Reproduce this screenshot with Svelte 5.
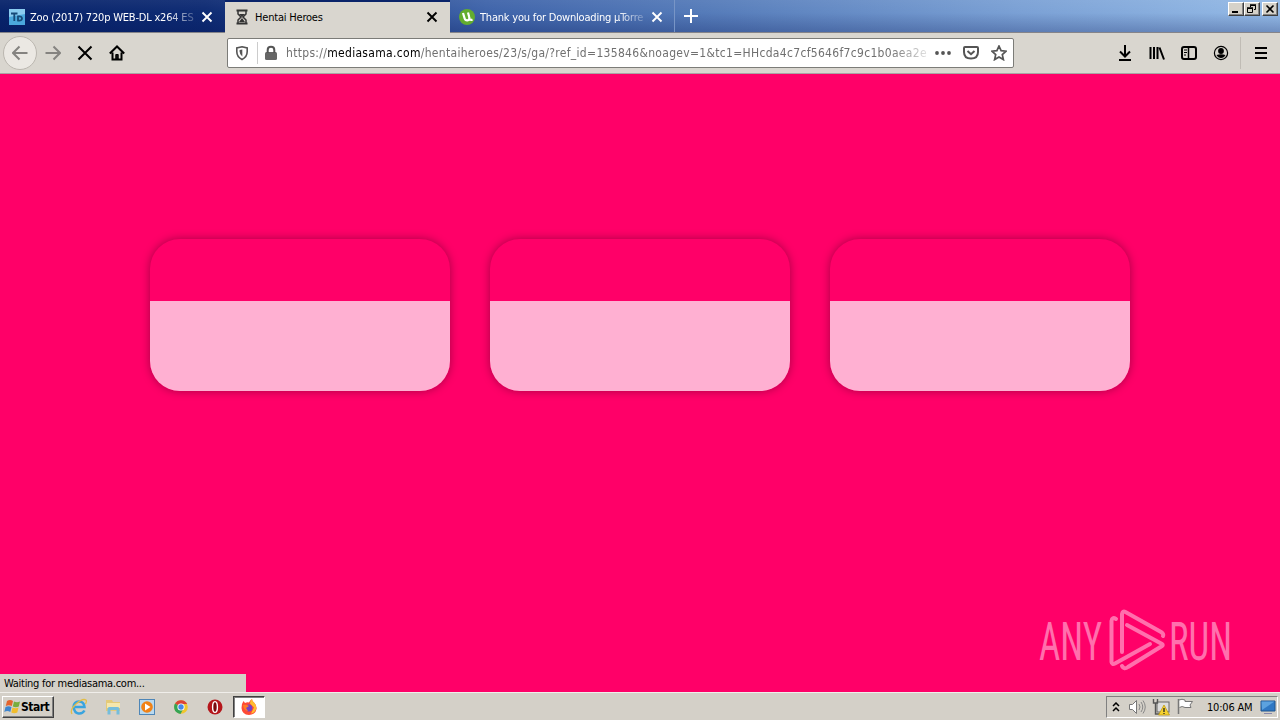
<script>
  const cards = [1, 2, 3];
</script>

{#snippet cross()}
  <svg class="cross" viewBox="0 0 12 12"><path d="M1.5 1.5l9 9M10.500 1.500l-9 9" /></svg>
{/snippet}

<div class="screen">
  <header class="titlebar">
    <div class="tab first">
      <svg class="favicon" viewBox="0 0 16 16">
        <rect width="16" height="16" fill="#8accf0" />
        <path d="M0 8l16-3v11H0z" fill="#4ba8dd" />
        <path d="M2 4.500h6.500M5.300 4.500V12M9 7.500v4q4 .5 4-2t-4-2z" fill="none" stroke="#174a78" stroke-width="1.800" />
      </svg>
      <span class="label fade">Zoo (2017) 720p WEB-DL x264 ES</span>
      {@render cross()}
    </div>
    <div class="tab active">
      <svg class="favicon" viewBox="0 0 16 16">
        <path d="M2.500 1.500h11M2.500 14.500h11" stroke="#333" stroke-width="2" />
        <path d="M4 2v3l3 3-3 3v3M12 2v3L9 8l3 3v3" fill="none" stroke="#333" stroke-width="1.500" />
        <path d="M5 5h6L8 8zM8 9l3 4H5z" fill="#333" />
      </svg>
      <span class="label">Hentai Heroes</span>
      {@render cross()}
    </div>
    <div class="tab third">
      <svg class="favicon" viewBox="0 0 16 16">
        <circle cx="8" cy="8" r="8" fill="#63ad2e" />
        <path d="M4 4l1.500 5q.8 3 3.500 2.200 2-.7 1.200-3.200L9 3.500M10.500 10q1 1.500 3 .5" fill="none" stroke="#fff" stroke-width="2.200" />
      </svg>
      <span class="label fade">Thank you for Downloading µTorre</span>
      {@render cross()}
    </div>
    <svg class="plus" viewBox="0 0 14 14"><path d="M7 0v14M0 7h14" stroke="#fff" stroke-width="2" /></svg>
    <div class="controls">
      <button aria-label="Minimize"><svg viewBox="0 0 12 10"><path d="M2 8h6" stroke="#000" stroke-width="2" /></svg></button>
      <button aria-label="Restore"><svg viewBox="0 0 12 10"><path d="M4.500 3V1.500h5v4H8M1.500 4.500h5v4h-5z" fill="none" stroke="#000" /><path d="M4 1h6M1 4h6" stroke="#000" stroke-width="1.500" /></svg></button>
      <button class="close" aria-label="Close"><svg viewBox="0 0 12 10"><path d="M2.500 1.500l7 7M9.500 1.500l-7 7" stroke="#000" stroke-width="1.600" /></svg></button>
    </div>
  </header>

  <nav class="toolbar">
    <div class="back"><svg viewBox="0 0 16 16"><path d="M15.500 8H1M7.500 1.500L1 8l6.500 6.500" /></svg></div>
    <svg class="icon forward" viewBox="0 0 16 16"><path d="M.5 8H15M8.500 1.500L15 8l-6.500 6.500" /></svg>
    <svg class="icon stop" viewBox="0 0 16 16"><path d="M1.500 1.500l13 13M14.500 1.500l-13 13" /></svg>
    <svg class="icon home" viewBox="0 0 16 16"><path d="M.8 8.500L8 1.500l7.200 7M3.500 7.500V14.500h9V7.500" /><path d="M6.800 14V9.500h2.400V14z" fill="#111" stroke-width="1" /></svg>
    <div class="urlbar">
      <svg class="shield" viewBox="0 0 16 16"><path d="M8 1.800l5.200 1.200v3.600q0 5.400-5.200 7.900Q2.800 12 2.800 6.600V3z" /><path d="M8.300 4.500v7Q5.600 9.700 5.600 6.200V5z" fill="#555" stroke="none" /></svg>
      <i></i>
      <svg class="lock" viewBox="0 0 16 16"><rect x="2" y="7" width="12" height="8" rx="1.500" fill="#666" stroke="none" /><path d="M4.700 8V5q0-3.200 3.300-3.200T11.300 5v3" stroke-width="2" /></svg>
      <span class="url">https://<b>mediasama.com</b>/hentaiheroes/23/s/ga/?ref_id=135846&amp;noagev=1&amp;tc1=HHcda4c7cf5646f7c9c1b0aea2e</span>
      <svg class="dots" viewBox="0 0 16 16"><g fill="#555" stroke="none"><circle cx="2" cy="8" r="1.900" /><circle cx="8" cy="8" r="1.900" /><circle cx="14" cy="8" r="1.900" /></g></svg>
      <svg class="pocket" viewBox="0 0 16 16"><path d="M2 2h12q1 0 1 1v4q0 6.500-7 6.500T1 7V3q0-1 1-1zM4.500 6L8 9.200 11.500 6" stroke-width="2" /></svg>
      <svg class="star" viewBox="0 0 16 16"><path d="M8 1l2.100 4.700 5 .5-3.800 3.400 1.100 5L8 12l-4.400 2.600 1.100-5L.9 6.200l5-.5z" stroke-width="1.700" /></svg>
    </div>
    <div class="actions">
      <svg viewBox="0 0 16 16"><path d="M8 0v11M3 6.500l5 5 5-5M2 15h12" /></svg>
      <svg viewBox="0 0 16 16"><path d="M1.500 2v12M5 2v12M8.500 2v12M10.500 2.500L15 14.500" /></svg>
      <svg viewBox="0 0 16 16"><rect x="1" y="2" width="14" height="12" rx="2" /><path d="M7.500 2v12" stroke-width="1.500" /><path d="M3 5h3M3 7.500h3M3 10h2" stroke-width="1" /></svg>
      <svg viewBox="0 0 16 16"><circle cx="8" cy="8" r="6.600" stroke-width="1.200" /><circle cx="8" cy="6" r="2.900" fill="#000" stroke="none" /><path d="M3.500 10q4.500-1.500 9 0-1.500 3-4.500 3t-4.500-3z" fill="#000" stroke="none" /></svg>
      <i></i>
      <svg class="menu" viewBox="0 0 16 16"><path d="M2 3h12M2 8h12M2 13h12" /></svg>
    </div>
  </nav>

  <main>
    <div class="cards">
      {#each cards as card (card)}
        <div class="card"><div class="card-body"></div></div>
      {/each}
    </div>
    <div class="status">Waiting for mediasama.com...</div>
    <svg class="watermark" viewBox="0 0 200 70">
      <text x="3" y="55" textLength="63" lengthAdjust="spacingAndGlyphs">ANY</text>
      <text x="133" y="55" textLength="63" lengthAdjust="spacingAndGlyphs">RUN</text>
      <path d="M80 14q-4-2.500-4.500 2v41q.5 3 3.500 1.500L114 39" />
      <path d="M86 47V9q.5-3.500 3.500-2L125 27q3 2 2 4" />
      <path d="M91 20l35 19q1.500 1 0 2L92 62q-4 3-6-1" />
    </svg>
  </main>

  <footer class="taskbar">
    <button class="start">
      <svg viewBox="0 0 17 16">
        <path d="M3 2q3-2 6 0L7.800 7q-3-1.500-6 0z" fill="#e5642c" />
        <path d="M10 2.500q3 1.500 6 0L14.800 7.500q-3 1.500-6 0z" fill="#78ad3d" />
        <path d="M1.500 8q3-1.500 6 0l-1.200 5q-3-1.800-6 0z" fill="#3e85ce" />
        <path d="M8.500 8.500q3 1.500 6 0l-1.200 5q-3 1.500-6 0z" fill="#f1bd2d" />
      </svg>Start
    </button>
    <div class="launch">
      <svg viewBox="0 0 18 18">
        <path d="M14.500 12.500q-2 3.500-6 3T3.500 9Q4 3.500 9 3.500T14.500 9H5" fill="none" stroke="#39a4df" stroke-width="2.500" />
        <path d="M2 16Q-.5 12 6 6T16 2q1 1-.5 4" fill="none" stroke="#e2bd47" stroke-width="1.300" />
      </svg>
      <svg viewBox="0 0 18 18">
        <path d="M2 2h6l1 2h7v9H2z" fill="#e4ca78" />
        <path d="M3 5h13v5H3z" fill="#f5e7ac" />
        <path d="M3.500 16.500V11q0-2 2-2h8q2 0 2 2v5.500h-3V12h-6v4.500z" fill="#76bddb" />
      </svg>
      <svg viewBox="0 0 18 18">
        <rect x="1.500" y="1.500" width="15" height="15" fill="#b9d9ef" stroke="#4e86b7" />
        <circle cx="9" cy="9" r="5.800" fill="#f08216" /><path d="M7 5.500v7L12.500 9z" fill="#fff" />
      </svg>
      <svg viewBox="0 0 18 18">
        <circle cx="9" cy="9" r="6.800" fill="#f0c62e" />
        <path d="M9 9L3 5.600A7 7 0 0 1 15.200 6H9z" fill="#dc4337" />
        <path d="M3 5.600A7 7 0 0 0 8.500 16l3-5.500L9 9z" fill="#35a455" />
        <circle cx="9" cy="9" r="3.600" fill="#fff" /><circle cx="9" cy="9" r="2.700" fill="#4688e8" />
      </svg>
      <svg viewBox="0 0 18 18"><circle cx="9" cy="9" r="7.500" fill="#b5161b" /><ellipse cx="9" cy="9" rx="2.400" ry="5.400" fill="#7a0a0e" stroke="#fff" stroke-width="1.400" /></svg>
      <div class="running">
        <svg viewBox="0 0 18 18">
          <path d="M2 6l1.500-3 1.500 2q2-1 4-.5Q10 2 12 1q0 2 2 3.500 3 3 2.500 6.500-1 5.500-7.500 6-7-.5-7.500-7z" fill="#ff4b36" />
          <path d="M12 1q0 2 2 3.500 3 3 2 7-2 4-5 4l3-6-4-4Q10 2 12 1z" fill="#ffbd2f" />
          <circle cx="8.800" cy="10" r="3.500" fill="#7443c5" /><path d="M3 7q3-1 6 1l-3 2 2 3q-4 0-5-6z" fill="#ff7d24" />
        </svg>
      </div>
    </div>
    <div class="tray">
      <svg class="chevrons" viewBox="0 0 8 10"><path d="M1 4l3-3 3 3M1 9l3-3 3 3" fill="none" stroke="#000" stroke-width="1.500" /></svg>
      <svg viewBox="0 0 18 18"><path d="M1.500 6.500h3l4-4v13l-4-4h-3z" fill="#fff" stroke="#777" /><path d="M11 6q2 3 0 6M13 4q3.500 5 0 10M15 2.500q4.500 6.500 0 13" fill="none" stroke="#888" /></svg>
      <svg viewBox="0 0 18 18"><rect x="5" y="4" width="12" height="10" fill="#ddd" stroke="#666" /><path d="M1.500 1v4h4V1M3.500 5v11h5" fill="none" stroke="#555" stroke-width="1.400" /><path d="M12 7l5.500 10h-11z" fill="#f6d22f" stroke="#b79307" stroke-width=".7" /><path d="M12 10v4M12 15v1" stroke="#222" stroke-width="1.300" /></svg>
      <svg class="flag" viewBox="0 0 18 18"><path d="M3 2q3-1.500 6 0v1.500h7.500L14 7l1 2.500H9q-3-2-5.500 0" fill="#fff" stroke="#777" /><path d="M2.500 1v15" stroke="#777" stroke-width="1.500" /></svg>
      <time>10:06 AM</time>
      <svg class="desktop" viewBox="0 0 18 18"><path d="M2 3h14v10H2z" fill="#2f78c4" stroke="#20548c" /><path d="M2.500 3.500h13L3 12z" fill="#5ca2df" /><path d="M5 15.500h8" stroke="#88a" /></svg>
    </div>
  </footer>
</div>

<style>
  :global(body) {
    overflow: hidden;
  }
  .screen {
    width: 1280px;
    height: 720px;
    display: flex;
    flex-direction: column;
    overflow: hidden;
    background: #ff0068;
    color: #000;
    font-family: "DejaVu Sans Condensed", "DejaVu Sans", sans-serif;
    font-stretch: condensed;
    font-size: 11px;
  }
  * {
    box-sizing: border-box;
  }
  svg {
    display: block;
    flex: none;
  }
  .titlebar {
    height: 33px;
    flex: none;
    display: flex;
    align-items: flex-start;
    border-bottom: 1px solid #858489;
    background: linear-gradient(180deg, rgba(255, 255, 255, 0.05), transparent 40%, rgba(0, 15, 80, 0.25)), linear-gradient(90deg, #08246b 0%, #0e2b73 16%, #3f64aa 38%, #557bb9 55%, #7ba1d5 80%, #94bae6 100%);
  }
  .tab {
    width: 225px;
    height: 32px;
    padding: 2px 12px 0 9px;
    display: flex;
    align-items: center;
    color: #fff;
  }
  .tab.active {
    height: 33px;
    border-top: 2px solid #0a246a;
    background: #d9d6cf;
    color: #000;
    padding-top: 0;
    padding-bottom: 1px;
  }
  .third {
    padding-right: 11px;
    border-right: 1px solid #7895c6;
  }
  .favicon {
    width: 16px;
    height: 16px;
    margin-right: 5px;
  }
  .label {
    flex: 1;
    min-width: 0;
    overflow: hidden;
    white-space: nowrap;
    letter-spacing: -0.2px;
  }
  .fade {
    mask-image: linear-gradient(90deg, #000 82%, rgba(0, 0, 0, 0.15) 100%);
  }
  .cross {
    width: 12px;
    height: 12px;
    margin-left: 4px;
    fill: none;
    stroke: currentColor;
    stroke-width: 1.9;
  }
  .plus {
    width: 14px;
    height: 14px;
    margin: 9px 0 0 9px;
  }
  .controls {
    display: flex;
    margin: 2px 2px 0 auto;
  }
  .controls button {
    width: 16px;
    height: 14px;
    padding: 0 1px;
    border: 1px solid;
    border-color: #fff #404040 #404040 #fff;
    box-shadow: inset -1px -1px #858585;
    background: #d6d2c9;
  }
  .controls svg {
    width: 12px;
    height: 10px;
  }
  .controls .close {
    margin-left: 2px;
  }
  .toolbar {
    height: 41px;
    flex: none;
    display: flex;
    align-items: center;
    padding-left: 3px;
    background: #d9d6cf;
    border-bottom: 1px solid #aaa3a4;
  }
  .toolbar svg {
    width: 16px;
    height: 16px;
    fill: none;
    stroke: #000;
    stroke-width: 2;
  }
  .back {
    width: 34px;
    height: 34px;
    display: flex;
    align-items: center;
    justify-content: center;
    border: 1px solid #bbb7b0;
    border-radius: 50%;
    background: #ebe8e3;
  }
  .toolbar .back svg,
  .toolbar .forward {
    stroke: #858380;
  }
  .icon {
    margin-left: 16px;
  }
  .icon.forward {
    margin-left: 8px;
  }
  .urlbar {
    width: 787px;
    height: 30px;
    margin-left: 102px;
    padding: 0 6px;
    display: flex;
    align-items: center;
    background: #fff;
    border: 1px solid #7c7c78;
    border-radius: 2px;
  }
  .toolbar .urlbar svg {
    stroke: #555;
    stroke-width: 1.6;
  }
  .urlbar i {
    height: 22px;
    margin: 0 5px 0 7px;
    border-left: 1px solid #ccc;
  }
  .url {
    width: 643px;
    margin: 0 6px 0 7px;
    overflow: hidden;
    white-space: nowrap;
    color: #707070;
    font-size: 12px;
    letter-spacing: 0.31px;
    mask-image: linear-gradient(90deg, #000 94%, rgba(0, 0, 0, 0.15) 100%);
  }
  .url b {
    color: #000;
    font-weight: normal;
  }
  .urlbar .pocket,
  .urlbar .star {
    margin-left: 12px;
  }
  .actions {
    margin: 0 11px 0 auto;
    display: flex;
    align-items: center;
    gap: 16px;
  }
  .actions i {
    height: 32px;
    width: 1px;
    margin: 0 -4px 0 -5px;
    background: #c0bcb5;
  }
  main {
    flex: 1;
    position: relative;
    padding-top: 165px;
  }
  .cards {
    display: flex;
    justify-content: center;
    gap: 40px;
  }
  .card {
    width: 300px;
    height: 152px;
    padding-top: 62px;
    border-radius: 30px;
    overflow: hidden;
    box-shadow: 0 0 10px rgba(0, 0, 0, 0.35);
  }
  .card-body {
    height: 90px;
    background: #ffb0d2;
  }
  .status {
    position: absolute;
    left: 0;
    bottom: 0;
    width: 246px;
    height: 18px;
    padding: 0 4px;
    line-height: 20px;
    letter-spacing: -0.28px;
    background: #d4d0c8;
  }
  .watermark {
    position: absolute;
    left: 1036px;
    top: 531px;
    width: 200px;
    height: 70px;
    fill: none;
    stroke: #ff70ad;
    stroke-width: 4;
    stroke-linecap: round;
  }
  .watermark text {
    font-family: Roboto, sans-serif;
    font-size: 53px;
    font-weight: 400;
    fill: #ff70ad;
    stroke: none;
  }
  .taskbar {
    height: 28px;
    flex: none;
    display: flex;
    align-items: center;
    padding: 1px 2px 0;
    background: #d4d0c8;
    border-top: 1px solid #f0eeea;
  }
  .start {
    width: 52px;
    height: 22px;
    padding: 0 1px;
    display: flex;
    align-items: center;
    border: 1px solid;
    border-color: #fff #404040 #404040 #fff;
    box-shadow: inset -1px -1px #808080;
    background: #d4d0c8;
    font: bold 12px "DejaVu Sans Condensed", "DejaVu Sans", sans-serif;
    letter-spacing: -0.5px;
  }
  .start svg {
    width: 17px;
    height: 16px;
  }
  .launch {
    display: flex;
    align-items: center;
    margin-left: 16px;
    gap: 16px;
  }
  .launch svg,
  .tray svg {
    width: 18px;
    height: 18px;
  }
  .running {
    width: 32px;
    height: 22px;
    margin-left: -7px;
    padding: 1px 6px;
    border: 1px solid;
    border-color: #404040 #fff #fff #404040;
    box-shadow: inset 1px 1px #808080;
    background: #fff;
  }
  .tray {
    width: 172px;
    height: 22px;
    margin-left: auto;
    padding-left: 5px;
    display: flex;
    align-items: center;
    border: 1px solid;
    border-color: #808080 #fff #fff #808080;
  }
  .tray .chevrons {
    width: 8px;
    height: 10px;
    margin: 0 8px 0 0;
  }
  .tray svg + svg + svg {
    margin-left: 6px;
  }
  time {
    margin: 0 5px 0 13px;
    width: 47px;
    white-space: nowrap;
    letter-spacing: -0.2px;
  }
</style>
